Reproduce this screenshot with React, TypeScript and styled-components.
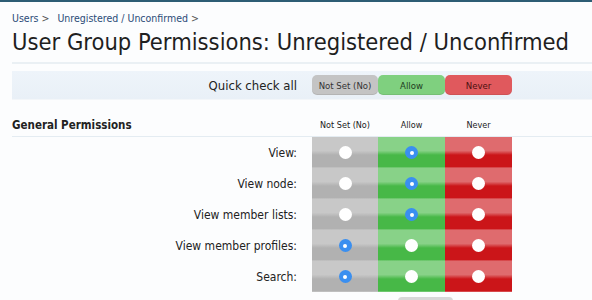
import React, { useState } from "react";
import styled, { createGlobalStyle } from "styled-components";

const GlobalStyle = createGlobalStyle`
  html, body {
    margin: 0;
    padding: 0;
    background: #fcfdfe;
  }
  body {
    font-family: "DejaVu Sans Condensed", "DejaVu Sans", Verdana, sans-serif;
    color: #222;
    border-top: 2px solid #2d5d74;
    overflow: hidden;
  }
`;

const Page = styled.div`
  padding: 0 0 0 12px;
`;

const Breadcrumb = styled.div`
  display: flex;
  gap: 8px;
  padding-top: 9px;
  font-size: 10.5px;
  color: #2b4b78;
  height: 14px;
  line-height: 14px;
`;

const Crumb = styled.span`
  &::after {
    content: " >";
    color: #555;
  }
`;

const Title = styled.h1`
  margin: 0;
  padding: 4px 0 6px;
  font-size: 23.5px;
  font-weight: normal;
  line-height: 27px;
  color: #1f1f1f;
  border-bottom: 2px solid #eaf0f4;
`;

const Grid = styled.div`
  display: grid;
  grid-template-columns: 300px 66px 67px 67px 1fr;
  & > :first-child {
    padding-right: 15px;
  }
`;

const QuickBar = styled(Grid)`
  margin-top: 7px;
  height: 28px;
  align-items: center;
  background: linear-gradient(to bottom, #eef4fa, #e9f0f7);
  border-bottom: 1px solid #f3f6f9;
`;

const QuickLabel = styled.div`
  text-align: right;
  font-size: 13px;
`;

type Kind = "unset" | "allow" | "never";

const buttonColors: Record<Kind, { bg: string; fg: string }> = {
  unset: { bg: "#c4c4c4", fg: "#333" },
  allow: { bg: "#7fd07f", fg: "#1e3d1e" },
  never: { bg: "#e0595d", fg: "#4a1010" },
};

const QuickButton = styled.button<{ $kind: Kind }>`
  height: 20px;
  border: none;
  border-radius: 5px;
  padding: 0;
  font-family: inherit;
  font-size: 9.5px;
  color: ${(p) => buttonColors[p.$kind].fg};
  background: ${(p) => buttonColors[p.$kind].bg};
  box-shadow: inset 0 -1px 0 rgba(0, 0, 0, 0.08);
  cursor: pointer;
`;

const SectionHead = styled(Grid)`
  margin-top: 17px;
  height: 19px;
  align-items: center;
  border-bottom: 1px solid #e4ecf2;
`;

const SectionTitle = styled.div`
  font-size: 11.5px;
  font-weight: bold;
  color: #222;
  margin-top: -3px;
`;

const ColHead = styled.div`
  text-align: center;
  font-size: 9px;
  color: #222;
  margin-top: -3px;
`;

const cellColors: Record<Kind, { light: string; dark: string }> = {
  unset: { light: "#c8c8c8", dark: "#b1b1b1" },
  allow: { light: "#88d288", dark: "#47b847" },
  never: { light: "#df6b6e", dark: "#cb1519" },
};

const Row = styled(Grid)`
  height: 31px;
`;

const RowLabel = styled.label`
  display: flex;
  align-items: center;
  justify-content: flex-end;
  font-size: 12px;
  color: #222;
`;

const Cell = styled.label<{ $kind: Kind }>`
  display: flex;
  align-items: center;
  justify-content: center;
  cursor: pointer;
  background: linear-gradient(
    to bottom,
    ${(p) => cellColors[p.$kind].light} 0%,
    ${(p) => cellColors[p.$kind].light} 44%,
    ${(p) => cellColors[p.$kind].dark} 58%,
    ${(p) => cellColors[p.$kind].dark} 96%,
    ${(p) => cellColors[p.$kind].light} 100%
  );
`;

const Radio = styled.span<{ $checked: boolean }>`
  width: 13px;
  height: 13px;
  border-radius: 50%;
  background: ${(p) => (p.$checked ? "#3a8ff0" : "#fff")};
  display: flex;
  align-items: center;
  justify-content: center;
  &::after {
    content: "";
    width: 4px;
    height: 4px;
    border-radius: 50%;
    background: #fff;
    display: ${(p) => (p.$checked ? "block" : "none")};
  }
`;

const Footer = styled(Grid)`
  margin-top: 5px;
`;

const SaveButton = styled.div`
  grid-column: 3;
  margin-left: 20px;
  width: 40px;
  height: 12px;
  border-radius: 4px 4px 0 0;
  background: #d8d8d8;
`;

const kinds: Kind[] = ["unset", "allow", "never"];

const initial = [
  { label: "View:", value: "allow" as Kind },
  { label: "View node:", value: "allow" as Kind },
  { label: "View member lists:", value: "allow" as Kind },
  { label: "View member profiles:", value: "unset" as Kind },
  { label: "Search:", value: "unset" as Kind },
];

const App: React.FC = () => {
  const [perms, setPerms] = useState(initial);

  const setAll = (kind: Kind) => setPerms((prev) => prev.map((p) => ({ ...p, value: kind })));

  const setOne = (index: number, kind: Kind) =>
    setPerms((prev) => prev.map((p, i) => (i === index ? { ...p, value: kind } : p)));

  return (
    <>
      <GlobalStyle />
      <Page>
        <Breadcrumb>
          <Crumb>Users</Crumb>
          <Crumb>Unregistered / Unconfirmed</Crumb>
        </Breadcrumb>
        <Title>User Group Permissions: Unregistered / Unconfirmed</Title>
        <QuickBar>
          <QuickLabel>Quick check all</QuickLabel>
          <QuickButton $kind="unset" onClick={() => setAll("unset")}>Not Set (No)</QuickButton>
          <QuickButton $kind="allow" onClick={() => setAll("allow")}>Allow</QuickButton>
          <QuickButton $kind="never" onClick={() => setAll("never")}>Never</QuickButton>
        </QuickBar>
        <SectionHead>
          <SectionTitle>General Permissions</SectionTitle>
          <ColHead>Not Set (No)</ColHead>
          <ColHead>Allow</ColHead>
          <ColHead>Never</ColHead>
        </SectionHead>
        {perms.map((perm, index) => (
          <Row key={perm.label}>
            <RowLabel>{perm.label}</RowLabel>
            {kinds.map((kind) => (
              <Cell key={kind} $kind={kind} onClick={() => setOne(index, kind)}>
                <Radio $checked={perm.value === kind} />
              </Cell>
            ))}
          </Row>
        ))}
        <Footer>
          <SaveButton />
        </Footer>
      </Page>
    </>
  );
};

export default App;
